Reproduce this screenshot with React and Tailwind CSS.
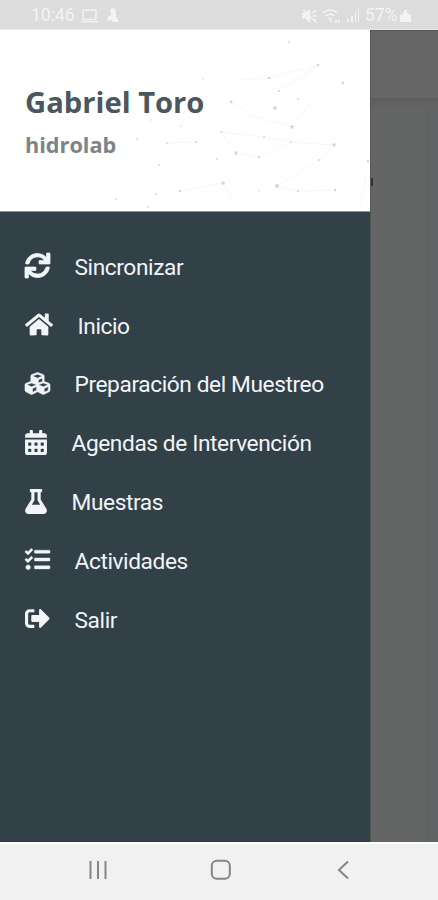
import {
  FaSync,
  FaHome,
  FaCubes,
  FaCalendarAlt,
  FaFlask,
  FaTasks,
  FaSignOutAlt,
} from "react-icons/fa";

const menuItems = [
  { label: "Sincronizar", icon: FaSync, size: "w-[25px] stroke-current stroke-[16]" },
  { label: "Inicio", icon: FaHome, size: "w-[28px]" },
  { label: "Preparación del Muestreo", icon: FaCubes, size: "w-[25px] stroke-current stroke-[12]" },
  { label: "Agendas de Intervención", icon: FaCalendarAlt, size: "w-[22px]" },
  { label: "Muestras", icon: FaFlask, size: "w-[22px]" },
  { label: "Actividades", icon: FaTasks, size: "w-[25px] stroke-current stroke-[8]" },
  { label: "Salir", icon: FaSignOutAlt, size: "w-[25px]" },
];

// [x, y, radius] inside the 370x182 header
const dots = [
  [289, 12, 1],
  [318, 35, 1.3],
  [269, 48, 1.3],
  [343, 53, 1.4],
  [203, 49, 0.8],
  [279, 61, 1],
  [298, 69, 1],
  [231, 72, 1.4],
  [275, 78, 1.8],
  [292, 97, 1.8],
  [334, 115, 1.8],
  [221, 102, 0.9],
  [264, 107, 0.9],
  [291, 112, 0.9],
  [236, 123, 1.8],
  [259, 127, 1.2],
  [217, 129, 0.9],
  [319, 130, 1],
  [368, 131, 1.2],
  [223, 153, 1.8],
  [277, 156, 2],
  [298, 161, 1.2],
  [335, 160, 1.2],
  [259, 161, 0.8],
  [196, 112, 1.1],
  [167, 113, 0.9],
  [159, 135, 1],
  [180, 161, 1.3],
  [156, 164, 1],
  [148, 177, 0.9],
  [116, 169, 1],
  [151, 90, 0.8],
  [181, 96, 0.8],
  [137, 109, 0.9],
];

const Constellation = () => (
  <svg className="absolute inset-0" width="370" height="182" viewBox="0 0 370 182">
    <g stroke="#f6f6f6" strokeWidth="0.9" fill="none">
      <path d="M318 35 269 48 240 50M318 35 298 53 269 60M318 35 279 61" />
      <path d="M334 115 319 130 277 156M334 115 291 112 264 107" />
      <path d="M236 123 259 127 291 112M236 123 221 102 264 107" />
      <path d="M277 156 298 161 335 160M223 153 236 175M223 153 180 161" />
      <path d="M231 72 251 85 292 97 310 74M196 112 167 113M366 146 360 175" />
    </g>
    <g fill="#d6d6d6">
      {dots.map(([x, y, r]) => (
        <circle key={`${x}-${y}`} cx={x} cy={y} r={r} />
      ))}
    </g>
  </svg>
);

const StatusBar = () => (
  <div className="flex h-[30px] shrink-0 items-center justify-between border-b border-[#e8e8e8] bg-[#dcdcdc] pt-[2px] pr-[27px] pl-[31px] text-[17.5px] text-[#f3f3f3]">
    <div className="flex items-center">
      <span className="w-[44px] leading-none">10:46</span>
      <svg className="ml-[6px]" width="17" height="14" viewBox="0 0 17 14" fill="none" stroke="currentColor" strokeWidth="1.4">
        <rect x="2" y="1" width="13" height="9.5" rx="1" />
        <path d="M0 12.7h17" />
      </svg>
      <svg className="ml-[8px]" width="13" height="15" viewBox="0 0 13 15" fill="currentColor">
        <circle cx="7" cy="3" r="2.7" />
        <path d="M5 5h5v4l2 2v3H7L5 12l-4 1 1-4 3-2z" />
      </svg>
    </div>
    <div className="flex items-center">
      <svg width="16" height="16" viewBox="0 0 17 16" fill="none" stroke="currentColor" strokeWidth="1.5">
        <path d="M1 5h3l4-3v12l-4-4H1z" fill="currentColor" />
        <path d="m1 1 14 14M11 5l4-3M11 8h5M12 11l3 2" />
      </svg>
      <svg className="ml-[4px]" width="20" height="16" viewBox="0 0 20 16" fill="none" stroke="currentColor" strokeWidth="1.5">
        <path d="M1 5c4-4 10-4 14 0M3.5 8c3-2.5 6-2.5 9 0M6 11c1.5-1 2.5-1 4 0" />
        <path d="m8 12 2 2M14 12v3M17 15v-3" />
      </svg>
      <svg className="ml-[4px]" width="14" height="15" viewBox="0 0 14 15" fill="currentColor">
        <path d="M1 11h2v3H1zM5 8h2v6H5zM9 4h1v10H9zM12 1h1v13h-1z" />
      </svg>
      <span className="ml-[5px] w-[33px] leading-none">57%</span>
      <svg className="ml-[2px]" width="11" height="14" viewBox="0 0 11 14" fill="currentColor">
        <path d="M4 1h3v3h1.500v2H11v7H0V6h2.500V4H4z" />
      </svg>
    </div>
  </div>
);

const DrawerHeader = () => (
  <header className="relative h-[182px] shrink-0 border-b border-[#8c959a] bg-white pt-[53px] pl-[25px] font-['Open_Sans',sans-serif] font-bold">
    <Constellation />
    <h1 className="relative text-[29.2px] leading-[38px] text-[#4a575f]">
      <span className="whitespace-nowrap">Gabriel Toro</span>
    </h1>
    <p className="relative mt-[9px] text-[21.7px] leading-[30px] text-[#7b8589]">
      hidrolab
    </p>
  </header>
);

const Drawer = () => (
  <aside className="flex w-[370px] shrink-0 flex-col bg-[#324048]">
    <DrawerHeader />
    <nav className="pt-[26.500px]">
      <ul>
        {menuItems.map(({ label, icon: Icon, size }) => (
          <li
            key={label}
            className="flex h-[58.8px] items-center gap-[25px] pl-[24.5px] text-[22.7px] tracking-[-0.4px] text-[#f1f5f8]"
          >
            <Icon className={`relative -top-[2px] h-[25px] shrink-0 overflow-visible ${size}`} />
            <span className="whitespace-nowrap">{label}</span>
          </li>
        ))}
      </ul>
    </nav>
  </aside>
);

// The page that stays dimmed behind the open drawer
const DimmedPage = () => (
  <div className="flex flex-1 flex-col border-t border-l border-[#555555] bg-[#646565]">
    <div className="h-[67px] bg-[#666666]" />
    <div className="h-[10px] bg-gradient-to-b from-[#5c5c5c] to-[#646565]" />
    <div className="mt-[70px] h-[8px] w-[2px] bg-[#333333]" />
    <div className="-mt-[78px] ml-auto w-[13px] flex-1 bg-[#606363]" />
  </div>
);

const NavigationBar = () => (
  <div className="h-[58px] shrink-0 border-t-2 border-white bg-[#f1f1f1] text-[#858585]">
    <div className="flex h-[52px] items-center pl-[88px]">
      <svg width="20" height="20" viewBox="0 0 20 20" stroke="currentColor" strokeWidth="2">
        <path d="M2.5 1v18M10 1v18M17.5 1v18" />
      </svg>
      <svg className="ml-[102px]" width="22" height="22" viewBox="0 0 22 22" fill="none" stroke="currentColor" strokeWidth="2">
        <rect x="1.8" y="1.8" width="18" height="18" rx="5" />
      </svg>
      <svg className="ml-[104px]" width="14" height="20" viewBox="0 0 14 20" fill="none" stroke="currentColor" strokeWidth="2">
        <path d="M12 1.5 3 10l9 8.5" />
      </svg>
    </div>
  </div>
);

const App = () => {
  return (
    <div className="flex h-[900px] w-[438px] flex-col overflow-hidden font-['Roboto',sans-serif]">
      <StatusBar />
      <div className="flex min-h-0 flex-1">
        <Drawer />
        <DimmedPage />
      </div>
      <NavigationBar />
    </div>
  );
};

export default App;
